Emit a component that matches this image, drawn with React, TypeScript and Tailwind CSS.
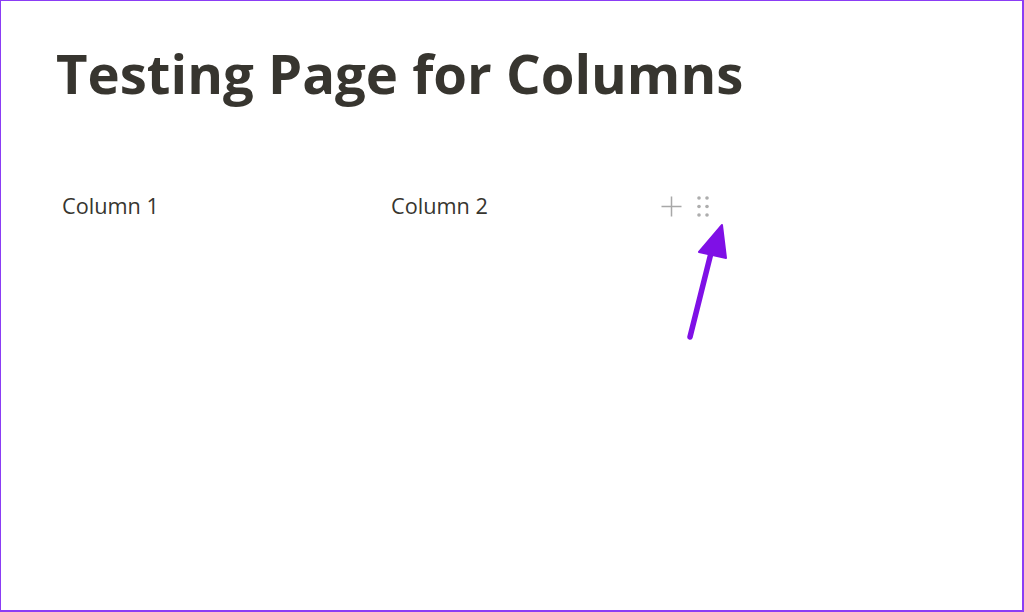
import React from "react";

export default function App() {
  return (
    <div
      className="w-[1024px] h-[612px] bg-white border-[2px] border-[#8b3df5] border-t-[1.5px] border-l-[1.5px] overflow-hidden relative"
      style={{ fontFamily: '"Open Sans", "Noto Sans", sans-serif' }}
    >
      <h1 className="pl-[55px] pt-[36px] text-[54.5px] leading-[72px] font-bold text-[#37352f]">
        Testing Page for Columns
      </h1>
      <div className="flex items-center pl-[61px] mt-[82px] text-[21.7px] leading-[30px] text-[#37352f]">
        <div className="w-[329px]">Column 1</div>
        <div className="w-[270px]">Column 2</div>
        <div className="flex items-center gap-[15px]">
          <svg width="21" height="21" viewBox="0 0 21 21">
            <path d="M10.5 0.5 V20.5 M0.5 10.5 H20.5" stroke="#a8a8a8" strokeWidth="1.5" />
          </svg>
          <svg width="12" height="23" viewBox="0 0 12 23">
            {[3, 11.5, 20].map((y) =>
              [2, 10].map((x) => (
                <circle key={`${x}-${y}`} cx={x} cy={y} r="1.8" fill="#adadad" />
              ))
            )}
          </svg>
        </div>
      </div>
      <svg
        className="absolute left-0 top-0 pointer-events-none"
        width="1024"
        height="612"
        viewBox="0 0 1024 612"
      >
        <line x1="689" y1="336" x2="711" y2="248" stroke="#7f10e6" strokeWidth="5.5" strokeLinecap="round" />
        <polygon points="721,224 698,251 725,257" fill="#7f10e6" stroke="#7f10e6" strokeWidth="2" strokeLinejoin="round" />
      </svg>
    </div>
  );
}
